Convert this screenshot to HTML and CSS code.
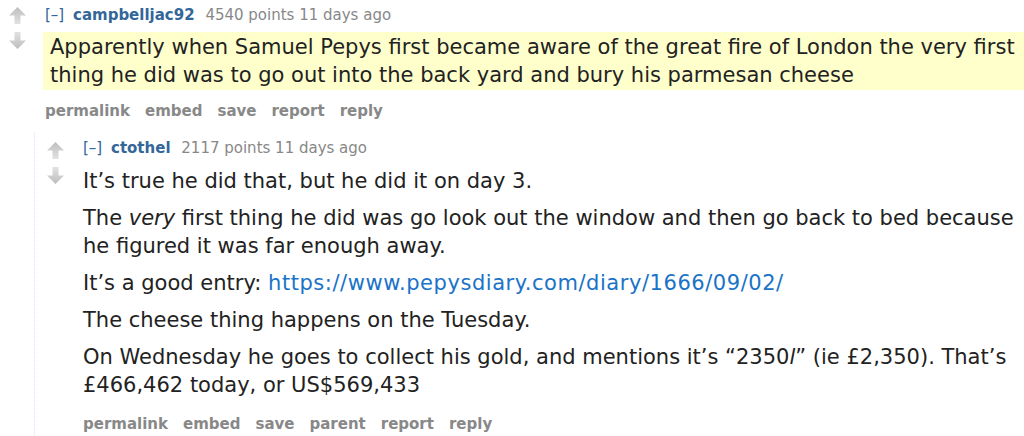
FILE: index.html
```html
<!DOCTYPE html>
<html>
<head>
<meta charset="utf-8">
<link rel="stylesheet" href="styles.css">
</head>
<body>
<div class="comment">
  <div class="midcol">
    <svg class="arrow" width="17" height="18" viewBox="0 0 17 18"><defs><linearGradient id="gu" x1="0" y1="0" x2="0" y2="1"><stop offset="0" stop-color="#bdbdbd"/><stop offset="1" stop-color="#e2e2e2"/></linearGradient><linearGradient id="gd" x1="0" y1="1" x2="0" y2="0"><stop offset="0" stop-color="#bdbdbd"/><stop offset="1" stop-color="#e2e2e2"/></linearGradient></defs><path d="M8.5 0 L17 8.5 L11.5 8.5 L11.5 17 L5.5 17 L5.5 8.5 L0 8.5 Z" fill="url(#gu)"/></svg>
    <svg class="arrow" width="17" height="18" viewBox="0 0 17 18"><path d="M8.5 18 L17 9.5 L11.5 9.5 L11.5 1 L5.5 1 L5.5 9.5 L0 9.5 Z" fill="url(#gd)"/></svg>
  </div>
  <div class="entry">
    <p class="tagline"><span class="expand">[–]</span> <span class="author">campbelljac92</span> <span class="score">4540 points</span> 11 days ago</p>
    <div class="md highlight">
      <p>Apparently when Samuel Pepys first became aware of the great fire of London the very first thing he did was to go out into the back yard and bury his parmesan cheese</p>
    </div>
    <ul class="buttons"><li>permalink</li><li>embed</li><li>save</li><li>report</li><li>reply</li></ul>
    <div class="child">
      <div class="comment">
        <div class="midcol">
          <svg class="arrow" width="17" height="18" viewBox="0 0 17 18"><path d="M8.5 0 L17 8.5 L11.5 8.5 L11.5 17 L5.5 17 L5.5 8.5 L0 8.5 Z" fill="url(#gu)"/></svg>
          <svg class="arrow" width="17" height="18" viewBox="0 0 17 18"><path d="M8.5 18 L17 9.5 L11.5 9.5 L11.5 1 L5.5 1 L5.5 9.5 L0 9.5 Z" fill="url(#gd)"/></svg>
        </div>
        <div class="entry">
          <p class="tagline"><span class="expand">[–]</span> <span class="author">ctothel</span> <span class="score">2117 points</span> 11 days ago</p>
          <div class="md">
            <p>It’s true he did that, but he did it on day 3.</p>
            <p>The <em>very</em> first thing he did was go look out the window and then go back to bed because he figured it was far enough away.</p>
            <p>It’s a good entry: <a href="#">https://www.pepysdiary.com/diary/1666/09/02/</a></p>
            <p>The cheese thing happens on the Tuesday.</p>
            <p>On Wednesday he goes to collect his gold, and mentions it’s “2350<em>l</em>” (ie £2,350). That’s £466,462 today, or US$569,433</p>
          </div>
          <ul class="buttons last"><li>permalink</li><li>embed</li><li>save</li><li>parent</li><li>report</li><li>reply</li></ul>
        </div>
      </div>
    </div>
  </div>
</div>
</body>
</html>
```

FILE: styles.css
```css
html, body {
  margin: 0;
  padding: 0;
  background: #fff;
}
body {
  font-family: "DejaVu Sans", Verdana, sans-serif;
  color: #222;
  overflow: hidden;
  height: 436px;
}
.comment {
  display: flex;
  align-items: flex-start;
}
body > .comment {
  padding-left: 9px;
  padding-top: 7px;
}
.midcol {
  width: 36px;
  flex: none;
  display: flex;
  flex-direction: column;
  gap: 6px;
}
.child .midcol {
  padding-top: 2px;
}
.arrow {
  display: block;
}
.entry {
  flex: 1;
  min-width: 0;
}
.tagline {
  margin: 0;
  font-size: 15px;
  line-height: 16px;
  color: #888;
}
.expand {
  color: #369;
  margin-right: 4px;
}
.author {
  color: #369;
  font-weight: bold;
  margin-right: 6px;
}
.md {
  margin-top: 11px;
  font-size: 21px;
  line-height: 28px;
}
.md.highlight {
  margin-top: 9px;
  background: #ffffcc;
  padding: 1px 8px 1px 7px;
  margin-left: -2px;
}
.md p {
  margin: 0 0 9px 0;
}
.md p:last-child {
  margin-bottom: 0;
}
.md a {
  color: #1a73c8;
  text-decoration: none;
  letter-spacing: 0.55px;
}
.buttons {
  list-style: none;
  margin: 12px 0 0 0;
  padding: 0;
  display: flex;
  gap: 15px;
  font-size: 15px;
  line-height: 18px;
  font-weight: bold;
  color: #888;
}
.buttons.last {
  margin-top: 16px;
}
.child {
  margin-top: 12px;
  margin-left: -11px;
  border-left: 1px dotted #ddf;
  padding-left: 12px;
  padding-top: 8px;
  padding-bottom: 4px;
}
```
